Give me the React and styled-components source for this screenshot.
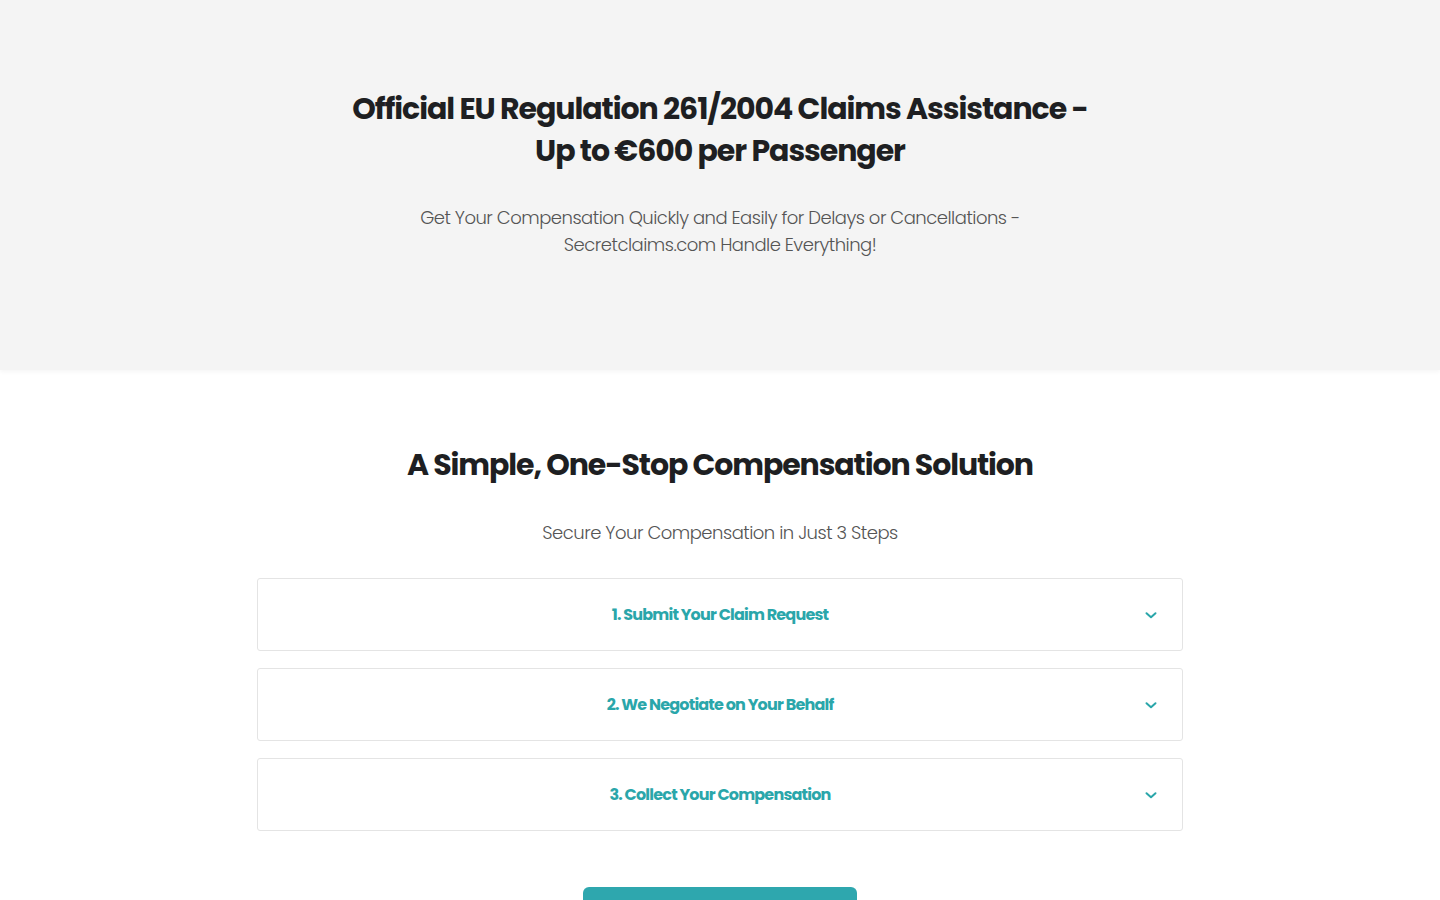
import React from 'react';
import styled, { createGlobalStyle } from 'styled-components';

const GlobalStyle = createGlobalStyle`
  html, body {
    margin: 0;
    padding: 0;
    background: #fff;
    font-family: "Poppins", Inter, "Noto Sans", sans-serif;
    color: #222;
  }
  * { box-sizing: border-box; }
`;

const Hero = styled.section`
  background: #f4f4f4;
  height: 370px;
  padding-top: 88px;
  box-shadow: 0 2px 4px rgba(0, 0, 0, 0.04);
  text-align: center;
`;

const HeroTitle = styled.h1`
  margin: 0 auto;
  max-width: 745px;
  font-size: 30px;
  line-height: 42px;
  font-weight: 700;
  letter-spacing: -1.05px;
  color: #1e1f22;
`;

const Lead = styled.p`
  margin: ${p => p.$mt || 0}px auto 0;
  max-width: ${p => p.$w || 640}px;
  font-size: 18px;
  line-height: 27px;
  font-weight: 300;
  letter-spacing: -0.5px;
  color: #555;
`;

const Steps = styled.section`
  padding-top: 74px;
  text-align: center;
`;

const SectionTitle = styled.h2`
  margin: 0;
  font-size: 30px;
  line-height: 42px;
  font-weight: 700;
  letter-spacing: -1.1px;
  color: #1e1f22;
`;

const List = styled.div`
  width: 926px;
  margin: 32px auto 0;
  display: flex;
  flex-direction: column;
  gap: 17px;
`;

const Item = styled.div`
  height: 73px;
  border: 1px solid #e4e4e4;
  border-radius: 3px;
  display: flex;
  align-items: center;
  justify-content: center;
  position: relative;
  background: #fff;
`;

const ItemTitle = styled.span`
  font-size: 16px;
  font-weight: 700;
  letter-spacing: -0.8px;
  color: #2aa6aa;
`;

const Chevron = styled.span`
  position: absolute;
  right: 24px;
  top: 50%;
  transform: translateY(-50%);
  display: flex;
  color: #2aa6aa;
`;

const Button = styled.button`
  display: block;
  margin: 56px auto 0;
  width: 274px;
  height: 56px;
  border: none;
  border-radius: 6px;
  background: #2ea7ae;
  color: #fff;
  font-family: inherit;
  font-size: 16px;
  font-weight: 600;
`;

const steps = [
  '1. Submit Your Claim Request',
  '2. We Negotiate on Your Behalf',
  '3. Collect Your Compensation',
];

const ChevronIcon = () => (
  <svg width="14" height="14" viewBox="0 0 14 14" fill="none">
    <path d="M2.5 5.2l4.5 4L11.5 5.2" stroke="currentColor" strokeWidth="2" strokeLinecap="round" strokeLinejoin="round" />
  </svg>
);

export default function App() {
  return (
    <>
      <GlobalStyle />
      <Hero>
        <HeroTitle>
          Official EU Regulation 261/2004 Claims Assistance - Up to €600 per Passenger
        </HeroTitle>
        <Lead $mt={32} $w={620}>
          Get Your Compensation Quickly and Easily for Delays or Cancellations - Secretclaims.com Handle Everything!
        </Lead>
      </Hero>
      <Steps>
        <SectionTitle>A Simple, One-Stop Compensation Solution</SectionTitle>
        <Lead $mt={33} $w={700}>Secure Your Compensation in Just 3 Steps</Lead>
        <List>
          {steps.map(s => (
            <Item key={s}>
              <ItemTitle>{s}</ItemTitle>
              <Chevron><ChevronIcon /></Chevron>
            </Item>
          ))}
        </List>
        <Button>Start Your Claim</Button>
      </Steps>
    </>
  );
}
